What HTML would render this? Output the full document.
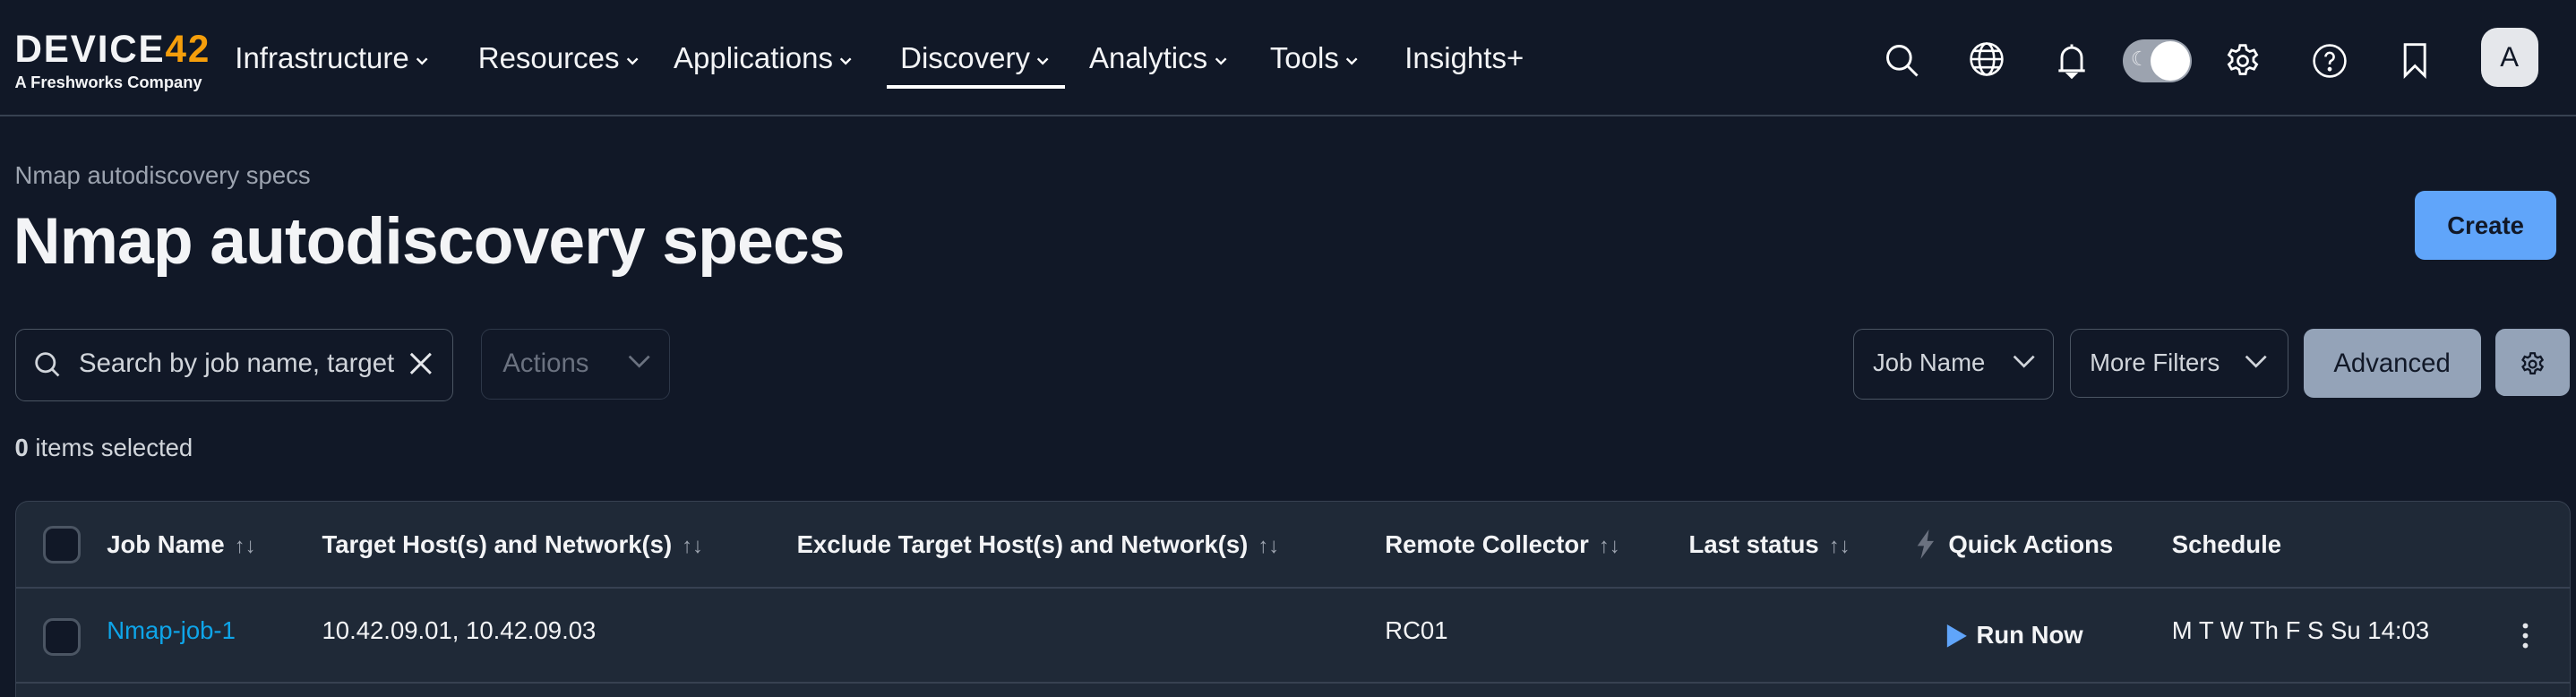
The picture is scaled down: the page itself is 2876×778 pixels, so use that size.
<!DOCTYPE html>
<html><head><meta charset="utf-8"><style>
*{box-sizing:border-box;margin:0;padding:0}
html,body{width:2876px;height:778px;overflow:hidden;background:#111827}
#w{zoom:1.83418;width:1568px;height:424px;position:relative;font-family:"Liberation Sans",sans-serif;color:#f3f4f6}
.a{position:absolute}
.nav{font-size:18px;top:25px;color:#f3f4f6;white-space:nowrap}
.nav svg{vertical-align:middle;margin-left:3px}
.box{border:1px solid #4b5563;border-radius:6px}
.th{font-size:15px;font-weight:bold;top:323px;white-space:nowrap}
.sort{color:#9ca3af;font-weight:normal;font-size:13px;margin-left:6px}
.td{font-size:15px;top:375px;white-space:nowrap}
.cb{width:23px;height:23px;border:2px solid #4b5563;border-radius:6px;background:#111827}
</style></head><body><div id="w">
<!-- logo -->
<div class="a" style="left:9px;top:18px;font-size:23px;letter-spacing:1px;font-weight:bold;line-height:24px">DEVICE<span style="color:#f59e0b">42</span></div>
<div class="a" style="left:9px;top:44px;font-size:10px;font-weight:bold">A Freshworks Company</div>
<div class="a nav" style="left:143px">Infrastructure<svg width="10" height="10"><path d="M2 4l3 3 3-3" stroke="#fff" fill="none" stroke-width="1.3"/></svg></div>
<div class="a nav" style="left:291px">Resources<svg width="10" height="10"><path d="M2 4l3 3 3-3" stroke="#fff" fill="none" stroke-width="1.3"/></svg></div>
<div class="a nav" style="left:410px">Applications<svg width="10" height="10"><path d="M2 4l3 3 3-3" stroke="#fff" fill="none" stroke-width="1.3"/></svg></div>
<div class="a nav" style="left:548px">Discovery<svg width="10" height="10"><path d="M2 4l3 3 3-3" stroke="#fff" fill="none" stroke-width="1.3"/></svg></div>
<div class="a" style="left:540px;top:52px;width:108px;height:2px;background:#fff"></div>
<div class="a nav" style="left:663px">Analytics<svg width="10" height="10"><path d="M2 4l3 3 3-3" stroke="#fff" fill="none" stroke-width="1.3"/></svg></div>
<div class="a nav" style="left:773px">Tools<svg width="10" height="10"><path d="M2 4l3 3 3-3" stroke="#fff" fill="none" stroke-width="1.3"/></svg></div>
<div class="a nav" style="left:855px">Insights+</div>
<svg class="a" style="left:1146px;top:25px" width="24" height="24" fill="none" stroke="#fff" stroke-width="1.6"><circle cx="10" cy="10" r="7"/><path d="M15 15l6 6"/></svg>
<svg class="a" style="left:1197px;top:24px" width="24" height="24" fill="none" stroke="#fff" stroke-width="1.4"><circle cx="12" cy="12" r="9.5"/><ellipse cx="12" cy="12" rx="4.5" ry="9.5"/><path d="M2.5 12h19M4 7h16M4 17h16"/></svg>
<svg class="a" style="left:1249px;top:24px" width="24" height="26" fill="none" stroke="#fff" stroke-width="1.6"><path d="M6 19V11a6 6 0 0 1 12 0v8M4 19h16M12 3v2"/><path d="M10 21h4l-2 2z" fill="#fff"/></svg>
<div class="a" style="left:1292px;top:24px;width:42px;height:26px;border-radius:13px;background:#9ca3af"></div>
<div class="a" style="left:1309px;top:25px;width:24px;height:24px;border-radius:12px;background:#fff"></div>
<div class="a" style="left:1297px;top:29px;font-size:12px;color:#e5e7eb">☾</div>
<svg class="a" style="left:1353px;top:25px" width="24" height="24" fill="none" stroke="#fff" stroke-width="1.5"><circle cx="12" cy="12" r="3"/><path d="M10.3 2.5h3.4l.6 2.7 1.9 1.1 2.6-.9 1.7 2.9-2 1.8v2.2l2 1.8-1.7 2.9-2.6-.9-1.9 1.1-.6 2.7h-3.4l-.6-2.7-1.9-1.1-2.6.9-1.7-2.9 2-1.8v-2.2l-2-1.8 1.7-2.9 2.6.9 1.9-1.1z"/></svg>
<svg class="a" style="left:1406px;top:25px" width="24" height="24" fill="none" stroke="#fff" stroke-width="1.4"><circle cx="12" cy="12" r="9.5"/><path d="M9.5 9.5a2.5 2.5 0 1 1 3.5 2.3c-.7.4-1 .9-1 1.7v.6"/><circle cx="12" cy="17" r=".6" fill="#fff"/></svg>
<svg class="a" style="left:1459px;top:25px" width="22" height="24" fill="none" stroke="#fff" stroke-width="1.6"><path d="M5 2h12v19l-6-6-6 6z"/></svg>
<div class="a" style="left:1510px;top:17px;width:35px;height:36px;border-radius:10px;background:#e5e7eb;color:#111827;font-size:17px;text-align:center;line-height:36px">A</div>
<div class="a" style="left:0;top:70px;width:1568px;height:1px;background:#374151"></div>
<!-- header -->
<div class="a" style="left:9px;top:98px;font-size:15px;color:#9ca3af">Nmap autodiscovery specs</div>
<div class="a" style="left:8px;top:124px;font-size:40px;font-weight:bold;letter-spacing:-0.5px">Nmap autodiscovery specs</div>
<div class="a" style="left:1470px;top:116px;width:86px;height:42px;border-radius:6px;background:#60a5fa;color:#111827;font-size:15px;font-weight:bold;text-align:center;line-height:42px">Create</div>
<!-- filters -->
<div class="a box" style="left:9px;top:200px;width:267px;height:44px"></div>
<svg class="a" style="left:20px;top:213px" width="18" height="18" fill="none" stroke="#d1d5db" stroke-width="1.5"><circle cx="7.5" cy="7.5" r="5.5"/><path d="M11.5 11.5l4 4"/></svg>
<div class="a" style="left:48px;top:212px;font-size:16px;color:#d1d5db;width:192px;overflow:hidden;white-space:nowrap">Search by job name, target</div>
<svg class="a" style="left:249px;top:214px" width="14" height="14" stroke="#e5e7eb" stroke-width="1.6"><path d="M1 1l12 12M13 1L1 13"/></svg>
<div class="a box" style="left:293px;top:200px;width:115px;height:43px;border-color:#2d3748"></div>
<div class="a" style="left:306px;top:212px;font-size:16px;color:#6b7280">Actions</div>
<svg class="a" style="left:381px;top:215px" width="16" height="12" fill="none" stroke="#6b7280" stroke-width="1.5"><path d="M2 2l6 6 6-6"/></svg>
<div class="a box" style="left:1128px;top:200px;width:122px;height:43px"></div>
<div class="a" style="left:1140px;top:212px;font-size:15px;color:#d1d5db">Job Name</div>
<svg class="a" style="left:1224px;top:215px" width="16" height="12" fill="none" stroke="#d1d5db" stroke-width="1.5"><path d="M2 2l6 6 6-6"/></svg>
<div class="a box" style="left:1260px;top:200px;width:133px;height:42px"></div>
<div class="a" style="left:1272px;top:212px;font-size:15px;color:#d1d5db">More Filters</div>
<svg class="a" style="left:1365px;top:215px" width="16" height="12" fill="none" stroke="#d1d5db" stroke-width="1.5"><path d="M2 2l6 6 6-6"/></svg>
<div class="a" style="left:1402px;top:200px;width:108px;height:42px;border-radius:6px;background:#94a3b8;color:#111827;font-size:16px;text-align:center;line-height:42px">Advanced</div>
<div class="a" style="left:1519px;top:200px;width:45px;height:41px;border-radius:6px;background:#94a3b8"></div>
<svg class="a" style="left:1533px;top:213px" width="17" height="17" viewBox="0 0 24 24" fill="none" stroke="#111827" stroke-width="1.8"><circle cx="12" cy="12" r="3"/><path d="M10.3 2.5h3.4l.6 2.7 1.9 1.1 2.6-.9 1.7 2.9-2 1.8v2.2l2 1.8-1.7 2.9-2.6-.9-1.9 1.1-.6 2.7h-3.4l-.6-2.7-1.9-1.1-2.6.9-1.7-2.9 2-1.8v-2.2l-2-1.8 1.7-2.9 2.6.9 1.9-1.1z"/></svg>
<div class="a" style="left:9px;top:264px;font-size:15px;color:#d1d5db"><b>0</b> items selected</div>
<!-- table -->
<div class="a" style="left:9px;top:305px;width:1556px;height:130px;background:#1f2937;border:1px solid #374151;border-radius:8px"></div>
<div class="a" style="left:10px;top:357px;width:1554px;height:1px;background:#374151"></div>
<div class="a" style="left:10px;top:415px;width:1554px;height:1px;background:#374151"></div>
<div class="a cb" style="left:26px;top:320px"></div>
<div class="a cb" style="left:26px;top:376px"></div>
<div class="a th" style="left:65px">Job Name<span class="sort">↑↓</span></div>
<div class="a th" style="left:196px">Target Host(s) and Network(s)<span class="sort">↑↓</span></div>
<div class="a th" style="left:485px">Exclude Target Host(s) and Network(s)<span class="sort">↑↓</span></div>
<div class="a th" style="left:843px">Remote Collector<span class="sort">↑↓</span></div>
<div class="a th" style="left:1028px">Last status<span class="sort">↑↓</span></div>
<svg class="a" style="left:1165px;top:322px" width="14" height="18"><path d="M9 0L2 10h4l-2 8 8-11H8z" fill="#6b7280"/></svg>
<div class="a th" style="left:1186px">Quick Actions</div>
<div class="a th" style="left:1322px">Schedule</div>
<div class="a td" style="left:65px;color:#0ea5e9">Nmap-job-1</div>
<div class="a td" style="left:196px">10.42.09.01, 10.42.09.03</div>
<div class="a td" style="left:843px">RC01</div>
<svg class="a" style="left:1184px;top:380px" width="14" height="14"><path d="M1 0l12 7-12 7z" fill="#60a5fa"/></svg>
<div class="a" style="left:1203px;top:378px;font-size:15px;font-weight:bold">Run Now</div>
<div class="a td" style="left:1322px">M T W Th F S Su 14:03</div>
<svg class="a" style="left:1534px;top:378px" width="6" height="18" fill="#e5e7eb"><circle cx="3" cy="3" r="1.6"/><circle cx="3" cy="9" r="1.6"/><circle cx="3" cy="15" r="1.6"/></svg>
</div></body></html>
